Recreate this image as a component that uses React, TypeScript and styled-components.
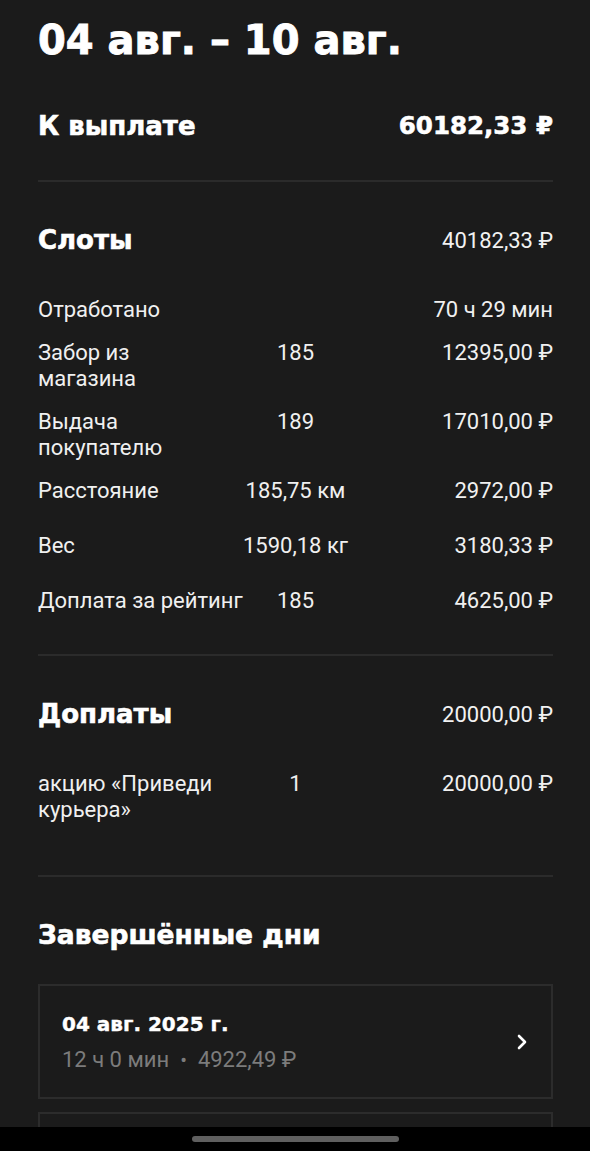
import React from 'react';
import styled, { createGlobalStyle } from 'styled-components';

const GlobalStyle = createGlobalStyle`
  html, body {
    margin: 0;
    padding: 0;
    background: #1b1b1b;
  }
  body {
    font-family: Roboto, 'Noto Sans', sans-serif;
    color: #f2f2f2;
  }
`;

const heavy = `'DejaVu Sans', Inter, sans-serif`;

const Page = styled.main`
  background: #1b1b1b;
  min-height: 1151px;
  padding: 15px 37px 60px 38px;
  box-sizing: border-box;
`;

const Title = styled.h1`
  margin: 0;
  font-family: ${heavy};
  font-weight: 700;
  font-size: 40px;
  line-height: 50px;
  color: #fff;
  -webkit-text-stroke: 0.9px #fff;
`;

const TotalRow = styled.div`
  display: flex;
  justify-content: space-between;
  align-items: center;
  margin-top: 45px;
  margin-bottom: 38px;
  font-family: ${heavy};
  font-weight: 700;
  font-size: 26px;
  line-height: 32px;
  color: #fff;
  -webkit-text-stroke: 0.6px #fff;
`;

const TotalSum = styled.span`
  font-size: 24.5px;
`;

const Divider = styled.hr`
  margin: 0;
  border: none;
  height: 2px;
  background: #2b2b2b;
`;

const Section = styled.section<{ $bottom: number }>`
  padding-top: 42px;
  padding-bottom: ${(p) => p.$bottom}px;
`;

const SectionHead = styled.div`
  display: flex;
  justify-content: space-between;
  align-items: center;
  height: 32px;
  margin-bottom: 41px;
`;

const SectionTitle = styled.h2`
  margin: 0;
  font-family: ${heavy};
  font-weight: 700;
  font-size: 26px;
  line-height: 32px;
  color: #fff;
  -webkit-text-stroke: 0.6px #fff;
`;

const SectionSum = styled.span`
  font-size: 22px;
  color: #f2f2f2;
`;

const Rows = styled.div`
  display: flex;
  flex-direction: column;
  gap: 17px;
`;

const Row = styled.div<{ $tall?: boolean }>`
  display: grid;
  grid-template-columns: repeat(3, minmax(0, 1fr));
  align-items: start;
  min-height: ${(p) => (p.$tall ? 38 : 0)}px;
  font-size: 22px;
  line-height: 26px;
  color: #f0f0f0;
`;

const Label = styled.span`
  white-space: nowrap;
`;

const Count = styled.span`
  text-align: center;
  white-space: nowrap;
`;

const Amount = styled.span`
  text-align: right;
  white-space: nowrap;
`;

const DaysHead = styled(SectionTitle)`
  font-size: 26.5px;
  margin-bottom: 33px;
`;

const Cards = styled.div`
  display: flex;
  flex-direction: column;
  gap: 13px;
`;

const Card = styled.div`
  display: flex;
  align-items: center;
  justify-content: space-between;
  border: 2px solid #2c2c2c;
  padding: 24px 22px;
  min-height: 63px;
`;

const CardText = styled.div`
  display: flex;
  flex-direction: column;
  gap: 9px;
`;

const CardTitle = styled.div`
  font-family: ${heavy};
  font-weight: 700;
  font-size: 20px;
  line-height: 28px;
  color: #fff;
  -webkit-text-stroke: 0.4px #fff;
`;

const CardSub = styled.div`
  font-size: 22px;
  line-height: 26px;
  color: #7c7c7c;
  display: flex;
  align-items: center;
  gap: 11px;
`;

const Dot = styled.span`
  font-size: 20px;
`;

const NavBar = styled.div`
  position: fixed;
  left: 0;
  right: 0;
  bottom: 0;
  height: 24px;
  background: #000;
  display: flex;
  justify-content: center;
  align-items: center;
`;

const Handle = styled.div`
  width: 207px;
  height: 6px;
  border-radius: 3px;
  background: #5f5f5f;
`;

const Chevron = () => (
  <svg width="14" height="18" viewBox="0 0 14 18" fill="none">
    <path d="M4 3 L10 9 L4 15" stroke="#fff" strokeWidth="2.6" strokeLinecap="round" strokeLinejoin="round" />
  </svg>
);

type Line = { label: React.ReactNode; count?: string; amount: string; tall?: boolean };

const slots: Line[] = [
  { label: 'Отработано', amount: '70 ч 29 мин' },
  { label: <>Забор из<br />магазина</>, count: '185', amount: '12395,00 ₽', tall: true },
  { label: <>Выдача<br />покупателю</>, count: '189', amount: '17010,00 ₽', tall: true },
  { label: 'Расстояние', count: '185,75 км', amount: '2972,00 ₽', tall: true },
  { label: 'Вес', count: '1590,18 кг', amount: '3180,33 ₽', tall: true },
  { label: 'Доплата за рейтинг', count: '185', amount: '4625,00 ₽', tall: true },
];

const extras: Line[] = [
  { label: <>акцию «Приведи<br />курьера»</>, count: '1', amount: '20000,00 ₽', tall: true },
];

const LineList = ({ items }: { items: Line[] }) => (
  <Rows>
    {items.map((it, i) => (
      <Row key={i} $tall={it.tall}>
        <Label>{it.label}</Label>
        <Count>{it.count}</Count>
        <Amount>{it.amount}</Amount>
      </Row>
    ))}
  </Rows>
);

export default function App() {
  return (
    <>
      <GlobalStyle />
      <Page>
        <Title>04 авг. – 10 авг.</Title>
        <TotalRow>
          <span>К выплате</span>
          <TotalSum>60182,33 ₽</TotalSum>
        </TotalRow>
        <Divider />

        <Section $bottom={28}>
          <SectionHead>
            <SectionTitle>Слоты</SectionTitle>
            <SectionSum>40182,33 ₽</SectionSum>
          </SectionHead>
          <LineList items={slots} />
        </Section>
        <Divider />

        <Section $bottom={52}>
          <SectionHead>
            <SectionTitle>Доплаты</SectionTitle>
            <SectionSum>20000,00 ₽</SectionSum>
          </SectionHead>
          <LineList items={extras} />
        </Section>
        <Divider />

        <Section $bottom={0}>
          <DaysHead>Завершённые дни</DaysHead>
          <Cards>
            <Card>
              <CardText>
                <CardTitle>04 авг. 2025 г.</CardTitle>
                <CardSub>
                  <span>12 ч 0 мин</span>
                  <Dot>•</Dot>
                  <span>4922,49 ₽</span>
                </CardSub>
              </CardText>
              <Chevron />
            </Card>
            <Card>
              <CardText>
                <CardTitle>05 авг. 2025 г.</CardTitle>
                <CardSub>
                  <span>12 ч 0 мин</span>
                  <Dot>•</Dot>
                  <span>4980,12 ₽</span>
                </CardSub>
              </CardText>
              <Chevron />
            </Card>
          </Cards>
        </Section>
      </Page>
      <NavBar>
        <Handle />
      </NavBar>
    </>
  );
}
